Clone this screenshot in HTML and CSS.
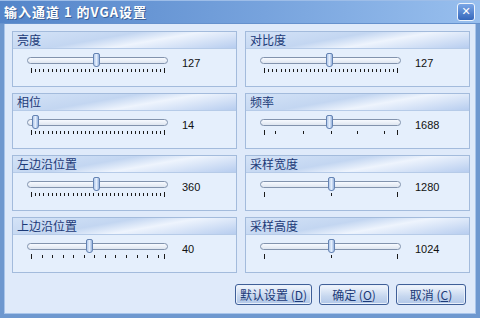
FILE: index.html
```html
<!DOCTYPE html>
<html lang="zh-CN">
<head>
    <meta charset="UTF-8">
    <title>输入通道 1 的VGA设置</title>
    <link rel="stylesheet" href="styles.css">
</head>
<body>
    <div class="window">
        <div class="titlebar">
            <span class="title">输入通道 1 的VGA设置</span>
            <span class="close">&#x2715;</span>
        </div>
        <div class="content">
            <div class="grid">
                <div class="panel">
                    <div class="panel-head">亮度</div>
                    <div class="panel-body">
                        <div class="slider" data-pos="0.49" data-ticks="dense"></div>
                        <span class="value">127</span>
                    </div>
                </div>
                <div class="panel">
                    <div class="panel-head">对比度</div>
                    <div class="panel-body">
                        <div class="slider" data-pos="0.49" data-ticks="dense"></div>
                        <span class="value">127</span>
                    </div>
                </div>
                <div class="panel">
                    <div class="panel-head">相位</div>
                    <div class="panel-body">
                        <div class="slider" data-pos="0.05" data-ticks="dense"></div>
                        <span class="value">14</span>
                    </div>
                </div>
                <div class="panel">
                    <div class="panel-head">频率</div>
                    <div class="panel-body">
                        <div class="slider" data-pos="0.49" data-ticks="0,0.08,0.29,0.5,0.7,0.9,1"></div>
                        <span class="value">1688</span>
                    </div>
                </div>
                <div class="panel">
                    <div class="panel-head">左边沿位置</div>
                    <div class="panel-body">
                        <div class="slider" data-pos="0.49" data-ticks="dense"></div>
                        <span class="value">360</span>
                    </div>
                </div>
                <div class="panel">
                    <div class="panel-head">采样宽度</div>
                    <div class="panel-body">
                        <div class="slider" data-pos="0.5" data-ticks="0,0.5,1"></div>
                        <span class="value">1280</span>
                    </div>
                </div>
                <div class="panel">
                    <div class="panel-head">上边沿位置</div>
                    <div class="panel-body">
                        <div class="slider" data-pos="0.44" data-ticks="sparse"></div>
                        <span class="value">40</span>
                    </div>
                </div>
                <div class="panel">
                    <div class="panel-head">采样高度</div>
                    <div class="panel-body">
                        <div class="slider" data-pos="0.5" data-ticks="0,0.5,1"></div>
                        <span class="value">1024</span>
                    </div>
                </div>
            </div>
            <div class="buttons">
                <button class="btn wide">默认设置 (<u>D</u>)</button>
                <button class="btn">确定 (<u>O</u>)</button>
                <button class="btn">取消 (<u>C</u>)</button>
            </div>
        </div>
    </div>
    <script>
        document.querySelectorAll(".slider").forEach(slider => {
            const track = document.createElement("div");
            track.className = "track";
            const thumb = document.createElement("div");
            thumb.className = "thumb";
            thumb.style.left = (parseFloat(slider.dataset.pos) * 100) + "%";
            track.appendChild(thumb);
            slider.appendChild(track);

            const ticks = document.createElement("div");
            ticks.className = "ticks";
            let spec = slider.dataset.ticks;
            let positions = [];
            if (spec === "dense") {
                for (let i = 0; i <= 32; i++) positions.push(i / 32);
            } else if (spec === "sparse") {
                for (let i = 0; i <= 12; i++) positions.push(i / 12.6);
                positions.push(1);
            } else {
                positions = spec.split(",").map(Number);
            }
            positions.forEach((p, i) => {
                const t = document.createElement("span");
                t.className = "tick";
                if (i === 0 || i === positions.length - 1) t.classList.add("end");
                t.style.left = (p * 100) + "%";
                ticks.appendChild(t);
            });
            slider.appendChild(ticks);
        });
    </script>
</body>
</html>
```
FILE: styles.css
```css
body {
    margin: 0;
    font-family: "Noto Sans CJK SC", "DejaVu Sans", sans-serif;
    background: #dfeafa;
}
.window {
    width: 480px;
    height: 318px;
    box-sizing: border-box;
    display: flex;
    flex-direction: column;
    background: #dfeafa;
    border: 4px solid #6e98cf;
    border-top: 0;
    box-shadow: inset 1px 0 0 #a9c5ea, inset -1px 0 0 #a9c5ea, inset 0 -1px 0 #a9c5ea;
}
.titlebar {
    height: 23px;
    margin: 0 -4px;
    display: flex;
    align-items: center;
    justify-content: space-between;
    padding: 0 5px 0 4px;
    background: linear-gradient(to right, #5485c9, #77a3dd 55%, #98bfee);
    border-bottom: 1px solid #6591cd;
    box-shadow: inset 0 1px 0 #9dbde8;
}
.title {
    color: #fff;
    font-size: 13px;
    font-weight: bold;
    letter-spacing: 1px;
    text-shadow: 1px 1px 0 #3b5f95;
}
.close {
    width: 16px;
    height: 16px;
    border: 1px solid #eef4fc;
    border-radius: 3px;
    background: linear-gradient(#7aa6e6, #3567bb);
    color: #fff;
    font-family: "DejaVu Sans", sans-serif;
    font-size: 11px;
    font-weight: bold;
    display: flex;
    align-items: center;
    justify-content: center;
}
.content {
    flex: 1;
    padding: 7px 7px 0 8px;
    display: flex;
    flex-direction: column;
}
.grid {
    display: grid;
    grid-template-columns: 225px 225px;
    column-gap: 8px;
    row-gap: 6px;
}
.panel {
    height: 56px;
    box-sizing: border-box;
    border: 1px solid #a3bbdc;
    background: #e5effc;
}
.panel-head {
    height: 16px;
    line-height: 16px;
    padding-left: 4px;
    font-size: 12px;
    color: #1c3a78;
    background: linear-gradient(170deg, #d4e3f7 0%, #c3d6f1 40%, #eef4fd 60%, #b7cdef 100%);
    border-bottom: 1px solid #b6cbe8;
}
.panel-body {
    display: flex;
    align-items: flex-start;
    padding: 8px 0 0 14px;
}
.slider {
    position: relative;
    width: 141px;
}
.track {
    position: relative;
    height: 5px;
    border: 1px solid #8293ad;
    border-radius: 4px;
    background: linear-gradient(#f7faff, #dfe6f0);
}
.thumb {
    position: absolute;
    top: -5px;
    width: 7px;
    height: 14px;
    margin-left: -3px;
    box-sizing: border-box;
    border: 1px solid #6483b3;
    border-radius: 2px 2px 3px 3px;
    background: linear-gradient(to right, #b5cbeb, #e4eefc 50%, #98b4de);
}
.ticks {
    position: relative;
    height: 5px;
    margin: 4px 4px 0 4px;
}
.tick {
    position: absolute;
    top: 1px;
    width: 1px;
    height: 3px;
    background: #1a1a1a;
}
.tick.end {
    top: 0;
    height: 5px;
}
.value {
    margin: 0 0 0 14px;
    font-family: "Liberation Sans", sans-serif;
    font-size: 11px;
    line-height: 12px;
    color: #111;
}
.buttons {
    display: flex;
    justify-content: flex-end;
    gap: 7px;
    margin-top: 11px;
    padding-right: 3px;
}
.btn {
    height: 21px;
    width: 70px;
    padding: 0;
    font-family: "Noto Sans CJK SC", sans-serif;
    font-size: 12px;
    color: #1c3a78;
    border: 1px solid #3f5f98;
    border-radius: 3px;
    background: linear-gradient(#f3f7fd, #c6d7ef 60%, #b1c7e8);
    box-shadow: inset 0 0 0 1px #e9f0fa;
}
.btn.wide {
    width: 77px;
}
.btn u {
    text-decoration: underline;
}
```
